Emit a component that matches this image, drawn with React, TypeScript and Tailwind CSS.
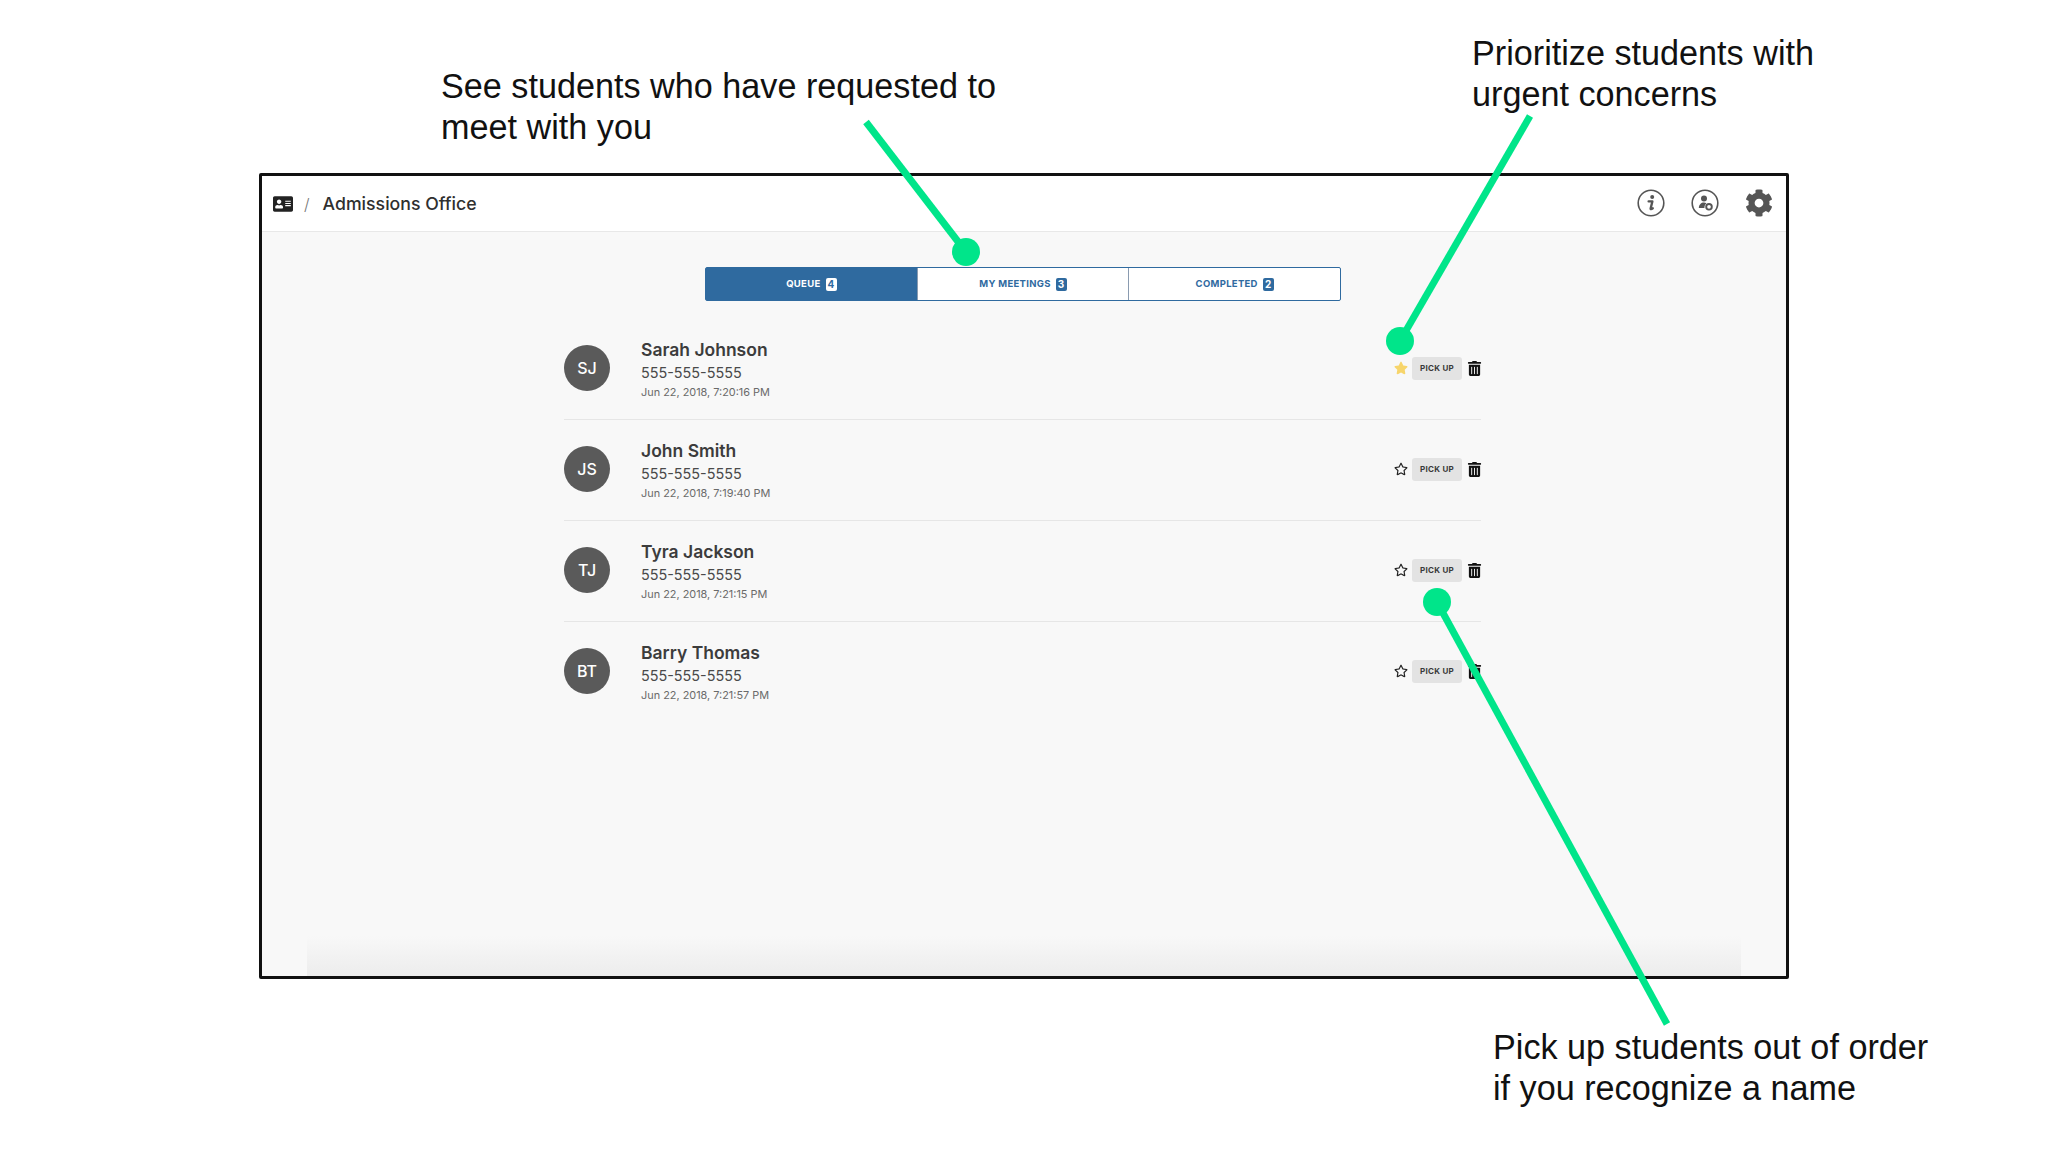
import React from 'react';
import { FaAddressCard, FaCog, FaRegStar, FaStar, FaTrashAlt } from 'react-icons/fa';

const students = [
  { initials: 'SJ', name: 'Sarah Johnson', time: 'Jun 22, 2018, 7:20:16 PM', starred: true },
  { initials: 'JS', name: 'John Smith', time: 'Jun 22, 2018, 7:19:40 PM', starred: false },
  { initials: 'TJ', name: 'Tyra Jackson', time: 'Jun 22, 2018, 7:21:15 PM', starred: false },
  { initials: 'BT', name: 'Barry Thomas', time: 'Jun 22, 2018, 7:21:57 PM', starred: false },
];

const tabs = [
  { label: 'QUEUE', count: 4, active: true },
  { label: 'MY MEETINGS', count: 3, active: false },
  { label: 'COMPLETED', count: 2, active: false },
];

const InfoIcon = () => (
  <svg width="28" height="28" viewBox="0 0 28 28" fill="none">
    <circle cx="14" cy="14" r="12.8" stroke="#555" strokeWidth="1.6" />
    <circle cx="15.2" cy="8" r="2" fill="#555" />
    <path d="M11.6 12.4h3.8l-1.8 7.2c-.1.8.7.9 2.2-.3" stroke="#555" strokeWidth="2.3" strokeLinecap="round" strokeLinejoin="round" />
  </svg>
);

const AgentIcon = () => (
  <svg width="28" height="28" viewBox="0 0 28 28" fill="none">
    <circle cx="14" cy="14" r="12.8" stroke="#555" strokeWidth="1.6" />
    <circle cx="13" cy="9.4" r="3" fill="#555" />
    <path d="M7.8 19c.2-3.4 2.4-5.4 5.1-5.4 1 0 1.8.2 2.5.7-1.3 1-2 2.7-2 4.7z" fill="#555" />
    <circle cx="18" cy="17.8" r="2.8" stroke="#555" strokeWidth="1.9" />
  </svg>
);

const Row = ({ s }: { s: (typeof students)[number] }) => (
  <div className="flex h-[101px] items-center border-b border-[#e6e6e6] pb-[3px] last:border-b-transparent">
    <div className="flex h-[46px] w-[46px] items-center justify-center rounded-full bg-[#5a5a5a] text-[16px] font-medium text-white">
      {s.initials}
    </div>
    <div className="ml-[31px] flex flex-col pt-[3px]">
      <div className="text-[17.5px] leading-[23px] font-semibold text-[#3c3c3c]">{s.name}</div>
      <div className="text-[14.4px] leading-[23px] text-[#4a4a4a]">555-555-5555</div>
      <div className="text-[10.9px] leading-[16px] text-[#6a6a6a]">{s.time}</div>
    </div>
    <div className="ml-auto flex items-center pt-[1px]">
      {s.starred ? (
        <FaStar className="text-[14px] text-[#f7d56b]" />
      ) : (
        <FaRegStar className="text-[14px] text-[#222]" />
      )}
      <button className="ml-[4px] h-[23px] w-[50px] rounded-[3px] bg-[#e3e3e3] text-[8px] font-bold tracking-[0.3px] text-[#3a3a3a]">
        PICK UP
      </button>
      <FaTrashAlt className="ml-[5px] mr-[-1px] text-[15px] text-[#111]" />
    </div>
  </div>
);

export default function App() {
  return (
    <div className="relative h-[1152px] w-[2048px] overflow-hidden bg-white pl-[259px] pt-[173px] font-['Inter',sans-serif]">
      <div className="flex h-[806px] w-[1530px] flex-col rounded-[2px] border-[3px] border-[#111] bg-[#f8f8f8]">
        <div className="flex h-[56px] items-center border-b border-[#e8e8e8] bg-white pl-[11px] pr-[13px]">
          <FaAddressCard className="text-[20px] text-[#222]" />
          <span className="ml-[11px] text-[16px] font-light text-[#777]">/</span>
          <span className="ml-[13px] pt-[1px] text-[17.7px] font-medium text-[#2f2f2f]">Admissions Office</span>
          <div className="ml-auto flex items-center gap-[26px] pb-[1px]">
            <InfoIcon />
            <AgentIcon />
            <FaCog className="text-[28px] text-[#555]" />
          </div>
        </div>

        <div className="ml-[443px] mt-[35px] flex h-[34px] w-[636px] rounded-[2px] border border-[#2f6a9f] bg-white">
          {tabs.map((t) => (
            <div
              key={t.label}
              className={
                t.active
                  ? 'flex flex-1 items-center justify-center gap-[5px] bg-[#2f6a9f] text-[9.5px] font-bold tracking-[0.3px] text-white'
                  : 'flex flex-1 items-center justify-center gap-[5px] border-l border-[#8a9bb0] text-[9.5px] font-bold tracking-[0.3px] text-[#2f6a9f]'
              }
            >
              {t.label}
              <span
                className={
                  t.active
                    ? 'flex h-[13px] w-[11px] items-center justify-center rounded-[2px] bg-white text-[10px] text-[#2f6a9f]'
                    : 'flex h-[13px] w-[11px] items-center justify-center rounded-[2px] bg-[#2f6a9f] text-[10px] text-white'
                }
              >
                {t.count}
              </span>
            </div>
          ))}
        </div>

        <div className="ml-[302px] mt-[18px] w-[917px]">
          {students.map((s) => (
            <Row key={s.initials} s={s} />
          ))}
        </div>

        <div className="mx-[45px] mt-auto h-[40px] bg-gradient-to-t from-[#ececec] to-transparent" />
      </div>

      {/* annotations */}
      <svg className="absolute left-0 top-0" width="2048" height="1152" fill="none">
        <path d="M866 122L966 252" stroke="#00e58a" strokeWidth="7" />
        <circle cx="966" cy="252" r="14" fill="#00e58a" />
        <path d="M1530 116L1400 341" stroke="#00e58a" strokeWidth="7" />
        <circle cx="1400" cy="341" r="14" fill="#00e58a" />
        <path d="M1437 602L1667 1024" stroke="#00e58a" strokeWidth="7" />
        <circle cx="1437" cy="602" r="14" fill="#00e58a" />
      </svg>
      <div className="absolute left-[441px] top-[66px] font-['Liberation_Sans',sans-serif] text-[34.2px] leading-[41px] text-[#111]">
        See students who have requested to
        <br />
        meet with you
      </div>
      <div className="absolute left-[1472px] top-[33px] font-['Liberation_Sans',sans-serif] text-[34.2px] leading-[41px] text-[#111]">
        Prioritize students with
        <br />
        urgent concerns
      </div>
      <div className="absolute left-[1493px] top-[1027px] font-['Liberation_Sans',sans-serif] text-[34.2px] leading-[41px] text-[#111]">
        Pick up students out of order
        <br />
        if you recognize a name
      </div>
    </div>
  );
}
